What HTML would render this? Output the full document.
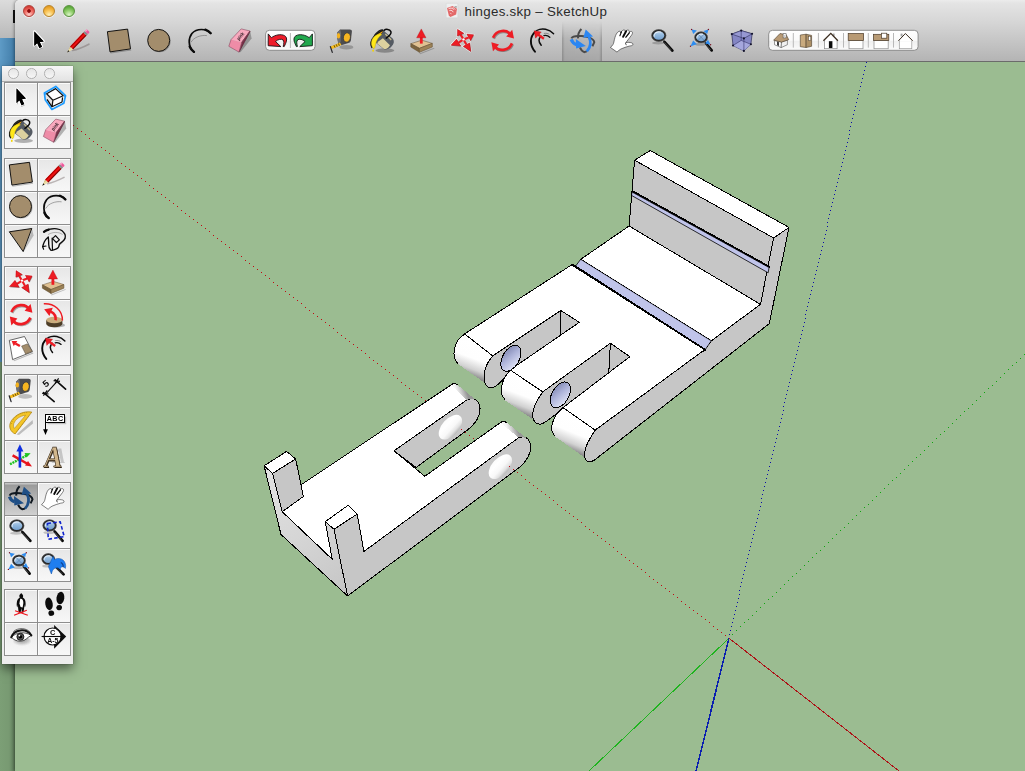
<!DOCTYPE html><html><head><meta charset="utf-8"><title>hinges.skp - SketchUp</title><style>
html,body{margin:0;padding:0}
body{width:1025px;height:771px;overflow:hidden;position:relative;background:#4d88b3;font-family:"Liberation Sans",sans-serif}
#back-top{position:absolute;left:0;top:0;width:20px;height:38px;background:linear-gradient(#dcdcdc,#b9b9b9)}
#back-blue{position:absolute;left:0;top:38px;width:16px;height:325px;background:linear-gradient(90deg,#5e9bc6,#3f7aa6)}
#back-green{position:absolute;left:0;top:362px;width:16px;height:409px;background:linear-gradient(90deg,#7c9f76 0,#789a72 9px,#5c7a58 15px)}
#back-dark{position:absolute;left:13px;top:10px;width:2px;height:13px;background:#111}
#win{position:absolute;left:15px;top:0;width:1010px;height:771px;background:linear-gradient(#ececec 0,#dcdcdc 30px,#9bbc91 30px);border-top-left-radius:5px;overflow:hidden;box-shadow:-1px 0 3px rgba(0,0,0,.35)}
#chrome{position:absolute;left:0;top:0;width:1010px;height:61px;background:linear-gradient(#ececec 0,#e4e4e4 3px,#d6d6d6 22px,#c2c2c2 45px,#b4b4b4 61px);border-bottom:1px solid #6b6b6b;box-sizing:content-box}
#title{position:absolute;left:449.5px;top:3.6px;height:16px;line-height:16px;font-size:13.3px;color:#2a2a2a;white-space:nowrap;letter-spacing:0.32px}
.tl{position:absolute;top:5px;width:12px;height:12px;border-radius:50%;box-sizing:border-box}
#sel{position:absolute;left:547px;top:21px;width:40px;height:40px;background:linear-gradient(90deg,rgba(0,0,0,.24),rgba(0,0,0,.09) 7%,rgba(0,0,0,.07) 93%,rgba(0,0,0,.24));-webkit-mask-image:linear-gradient(transparent,#000 45%);mask-image:linear-gradient(transparent,#000 45%)}
svg{position:absolute;left:0;top:0;will-change:transform}
#pal{position:absolute;left:2px;top:66px;width:71px;height:598px;background:#ededed;box-shadow:0 5px 10px rgba(0,0,0,.5),0 0 1px rgba(0,0,0,.5)}
#pal-t{position:absolute;left:0;top:0;width:71px;height:15px;background:linear-gradient(#f6f6f6,#e3e3e3);border-bottom:1px solid #a9a9a9}
.pc{position:absolute;top:2.2px;width:10.6px;height:10.6px;box-sizing:border-box;border-radius:50%;border:1px solid #b2b2b2;background:linear-gradient(#e6e6e6,#f6f6f6)}
.grp{position:absolute;left:2px;width:67px;background:#8e8e8e}
.cell{position:absolute;width:32px;height:32px;background:linear-gradient(#e6e6e6 0,#efefef 45%,#f7f7f7 100%);box-shadow:inset 1px 1px 0 #fbfbfb}
.cell.on{background:linear-gradient(#c4c4c4 0,#c4c4c4 1px,#9a9a9a 2px,#b6b6b6 50%,#d0d0d0);box-shadow:none}
</style></head><body>
<div id="back-top"></div><div id="back-blue"></div><div id="back-green"></div><div id="back-dark"></div>
<div id="win"><div id="chrome">
<div class="tl" style="left:8px;background:radial-gradient(circle at 50% 50%,#8a0a0a 0,#8a0a0a 1.4px,rgba(0,0,0,0) 2.2px),radial-gradient(circle at 50% 88%,#ffd0cb 0,#f3766e 42%,#d8443c 75%,#c8352e 100%);border:1px solid #b0403a;box-shadow:0 1px 0 rgba(255,255,255,.55)"></div>
<div class="tl" style="left:28px;background:radial-gradient(circle at 50% 88%,#fff0b8 0,#f9c458 42%,#e9a228 75%,#d8901c 100%);border:1px solid #b8842a;box-shadow:0 1px 0 rgba(255,255,255,.55)"></div>
<div class="tl" style="left:48px;background:radial-gradient(circle at 50% 88%,#dcf5c8 0,#94d070 42%,#62ae40 75%,#4f9a32 100%);border:1px solid #5a9240;box-shadow:0 1px 0 rgba(255,255,255,.55)"></div>
<svg width="14" height="17" viewBox="445 2 14 17" style="left:430px;top:2px"><rect x="446.2" y="3.3" width="11.6" height="14.5" rx=".8" fill="#eef0f0" stroke="#d2d4d4" stroke-width=".5"/><polygon points="447,7.9 452.5,6.1 457,8.8 456.1,14.5 450.4,16.9 448.8,15.6" fill="#e15a5a" opacity=".9"/><path d="M448.6,8.6 C450.6,7.6 452.6,8.2 453.6,9.6 M449.4,10.6 C451.4,9.8 452.8,10.8 453.2,12.2 M450.4,13.4 L451.4,13.8" stroke="#fff" stroke-width=".9" fill="none" opacity=".9"/><path d="M452.8,7.2 L455.2,9.6" stroke="#fff" stroke-width=".9" opacity=".85"/><rect x="454.6" y="6.2" width="2.2" height="1.4" fill="#8a8a8a" opacity=".8"/></svg>
<div id="title">hinges.skp – SketchUp</div>
<div id="sel"></div>
</div></div>
<svg width="1025" height="771" viewBox="0 0 1025 771" style="pointer-events:none"><defs><clipPath id="cv"><rect x="15" y="62" width="1010" height="709"/></clipPath></defs><g clip-path="url(#cv)">
<defs>
<linearGradient id="gk1" gradientUnits="userSpaceOnUse" x1="478" y1="342" x2="466" y2="374"><stop offset="0" stop-color="#fff"/><stop offset=".5" stop-color="#fefefe"/><stop offset=".8" stop-color="#d2d2d2"/><stop offset="1" stop-color="#8e8e8e"/></linearGradient>
<linearGradient id="gk2" gradientUnits="userSpaceOnUse" x1="525" y1="378" x2="513" y2="410"><stop offset="0" stop-color="#fff"/><stop offset=".5" stop-color="#fefefe"/><stop offset=".8" stop-color="#d2d2d2"/><stop offset="1" stop-color="#8e8e8e"/></linearGradient>
<linearGradient id="gk3" gradientUnits="userSpaceOnUse" x1="578" y1="416" x2="565" y2="448"><stop offset="0" stop-color="#fff"/><stop offset=".5" stop-color="#fefefe"/><stop offset=".8" stop-color="#d2d2d2"/><stop offset="1" stop-color="#8e8e8e"/></linearGradient>
<linearGradient id="ghole" x1="0" y1="0.2" x2="1" y2="0.8"><stop offset="0" stop-color="#7f86b0"/><stop offset=".45" stop-color="#aeb4da"/><stop offset="1" stop-color="#e4e7f8"/></linearGradient>
<linearGradient id="gsa" gradientUnits="userSpaceOnUse" x1="457" y1="393" x2="466" y2="390"><stop offset="0" stop-color="#f6f6f6"/><stop offset=".4" stop-color="#d4d4d4"/><stop offset="1" stop-color="#969696"/></linearGradient>
<linearGradient id="gsb" gradientUnits="userSpaceOnUse" x1="508" y1="431" x2="517" y2="428"><stop offset="0" stop-color="#f6f6f6"/><stop offset=".4" stop-color="#d4d4d4"/><stop offset="1" stop-color="#969696"/></linearGradient>
<linearGradient id="gfront" gradientUnits="userSpaceOnUse" x1="266" y1="470" x2="346" y2="590"><stop offset="0" stop-color="#e2e2e2"/><stop offset=".5" stop-color="#d6d6d6"/><stop offset="1" stop-color="#c6c6c6"/></linearGradient>
<linearGradient id="gpin" x1="0" y1="0" x2="0" y2="1"><stop offset="0" stop-color="#fbfbfb"/><stop offset=".25" stop-color="#ffffff"/><stop offset=".6" stop-color="#f8f8f8"/><stop offset=".82" stop-color="#e2e2e2"/><stop offset="1" stop-color="#b6b6b6"/></linearGradient>
</defs><g shape-rendering="crispEdges"><path d="M725,635h1v1h-1zM721,632h1v1h-1zM717,629h1v1h-1zM713,626h1v1h-1zM709,622h1v1h-1zM705,619h1v1h-1zM701,616h1v1h-1zM697,613h1v1h-1zM693,610h1v1h-1zM689,607h1v1h-1zM685,604h1v1h-1zM681,601h1v1h-1zM677,597h1v1h-1zM673,594h1v1h-1zM669,591h1v1h-1zM665,588h1v1h-1zM661,585h1v1h-1zM657,582h1v1h-1zM653,579h1v1h-1zM649,576h1v1h-1zM645,572h1v1h-1zM641,569h1v1h-1zM637,566h1v1h-1zM633,563h1v1h-1zM629,560h1v1h-1zM625,557h1v1h-1zM621,554h1v1h-1zM617,551h1v1h-1zM613,547h1v1h-1zM609,544h1v1h-1zM605,541h1v1h-1zM601,538h1v1h-1zM597,535h1v1h-1zM593,532h1v1h-1zM589,529h1v1h-1zM585,526h1v1h-1zM581,522h1v1h-1zM577,519h1v1h-1zM573,516h1v1h-1zM569,513h1v1h-1zM565,510h1v1h-1zM561,507h1v1h-1zM557,504h1v1h-1zM553,500h1v1h-1zM549,497h1v1h-1zM545,494h1v1h-1zM541,491h1v1h-1zM537,488h1v1h-1zM533,485h1v1h-1zM529,482h1v1h-1zM525,479h1v1h-1zM521,475h1v1h-1zM517,472h1v1h-1zM513,469h1v1h-1zM509,466h1v1h-1zM505,463h1v1h-1zM501,460h1v1h-1zM497,457h1v1h-1zM493,454h1v1h-1zM489,450h1v1h-1zM485,447h1v1h-1zM481,444h1v1h-1zM477,441h1v1h-1zM473,438h1v1h-1zM469,435h1v1h-1zM465,432h1v1h-1zM461,429h1v1h-1zM457,425h1v1h-1zM453,422h1v1h-1zM449,419h1v1h-1zM445,416h1v1h-1zM441,413h1v1h-1zM437,410h1v1h-1zM433,407h1v1h-1zM429,404h1v1h-1zM425,400h1v1h-1zM421,397h1v1h-1zM417,394h1v1h-1zM413,391h1v1h-1zM409,388h1v1h-1zM405,385h1v1h-1zM401,382h1v1h-1zM397,378h1v1h-1zM393,375h1v1h-1zM389,372h1v1h-1zM385,369h1v1h-1zM381,366h1v1h-1zM377,363h1v1h-1zM373,360h1v1h-1zM369,357h1v1h-1zM365,353h1v1h-1zM361,350h1v1h-1zM357,347h1v1h-1zM353,344h1v1h-1zM349,341h1v1h-1zM345,338h1v1h-1zM341,335h1v1h-1zM337,332h1v1h-1zM333,328h1v1h-1zM329,325h1v1h-1zM325,322h1v1h-1zM321,319h1v1h-1zM317,316h1v1h-1zM313,313h1v1h-1zM309,310h1v1h-1zM305,307h1v1h-1zM301,303h1v1h-1zM297,300h1v1h-1zM293,297h1v1h-1zM289,294h1v1h-1zM285,291h1v1h-1zM281,288h1v1h-1zM277,285h1v1h-1zM273,282h1v1h-1zM269,278h1v1h-1zM265,275h1v1h-1zM261,272h1v1h-1zM257,269h1v1h-1zM253,266h1v1h-1zM249,263h1v1h-1zM245,260h1v1h-1zM241,256h1v1h-1zM237,253h1v1h-1zM233,250h1v1h-1zM229,247h1v1h-1zM225,244h1v1h-1zM221,241h1v1h-1zM217,238h1v1h-1zM213,235h1v1h-1zM209,231h1v1h-1zM205,228h1v1h-1zM201,225h1v1h-1zM197,222h1v1h-1zM193,219h1v1h-1zM189,216h1v1h-1zM185,213h1v1h-1zM181,210h1v1h-1zM177,206h1v1h-1zM173,203h1v1h-1zM169,200h1v1h-1zM165,197h1v1h-1zM161,194h1v1h-1zM157,191h1v1h-1zM153,188h1v1h-1zM149,185h1v1h-1zM145,181h1v1h-1zM141,178h1v1h-1zM137,175h1v1h-1zM133,172h1v1h-1zM129,169h1v1h-1zM125,166h1v1h-1zM121,163h1v1h-1zM117,160h1v1h-1zM113,156h1v1h-1zM109,153h1v1h-1zM105,150h1v1h-1zM101,147h1v1h-1zM97,144h1v1h-1zM93,141h1v1h-1zM89,138h1v1h-1zM85,134h1v1h-1zM81,131h1v1h-1zM77,128h1v1h-1zM73,125h1v1h-1zM69,122h1v1h-1zM65,119h1v1h-1zM61,116h1v1h-1z" fill="#c00a14" shape-rendering="crispEdges"/><path d="M729,634h1v1h-1zM730,630h1v1h-1zM731,626h1v1h-1zM732,622h1v1h-1zM733,618h1v1h-1zM734,614h1v1h-1zM735,610h1v1h-1zM736,606h1v1h-1zM737,602h1v1h-1zM738,598h1v1h-1zM739,594h1v1h-1zM739,590h1v1h-1zM740,586h1v1h-1zM741,582h1v1h-1zM742,578h1v1h-1zM743,574h1v1h-1zM744,570h1v1h-1zM745,566h1v1h-1zM746,562h1v1h-1zM747,558h1v1h-1zM748,554h1v1h-1zM749,550h1v1h-1zM750,546h1v1h-1zM751,542h1v1h-1zM752,538h1v1h-1zM753,534h1v1h-1zM754,530h1v1h-1zM755,526h1v1h-1zM756,522h1v1h-1zM757,518h1v1h-1zM758,514h1v1h-1zM759,510h1v1h-1zM760,506h1v1h-1zM761,502h1v1h-1zM761,498h1v1h-1zM762,494h1v1h-1zM763,490h1v1h-1zM764,486h1v1h-1zM765,482h1v1h-1zM766,478h1v1h-1zM767,474h1v1h-1zM768,470h1v1h-1zM769,466h1v1h-1zM770,462h1v1h-1zM771,458h1v1h-1zM772,454h1v1h-1zM773,450h1v1h-1zM774,446h1v1h-1zM775,442h1v1h-1zM776,438h1v1h-1zM777,434h1v1h-1zM778,430h1v1h-1zM779,426h1v1h-1zM780,422h1v1h-1zM781,418h1v1h-1zM782,414h1v1h-1zM783,410h1v1h-1zM783,406h1v1h-1zM784,402h1v1h-1zM785,398h1v1h-1zM786,394h1v1h-1zM787,390h1v1h-1zM788,386h1v1h-1zM789,382h1v1h-1zM790,378h1v1h-1zM791,374h1v1h-1zM792,370h1v1h-1zM793,366h1v1h-1zM794,362h1v1h-1zM795,358h1v1h-1zM796,354h1v1h-1zM797,350h1v1h-1zM798,346h1v1h-1zM799,342h1v1h-1zM800,338h1v1h-1zM801,334h1v1h-1zM802,330h1v1h-1zM803,326h1v1h-1zM804,322h1v1h-1zM805,318h1v1h-1zM805,314h1v1h-1zM806,310h1v1h-1zM807,306h1v1h-1zM808,302h1v1h-1zM809,298h1v1h-1zM810,294h1v1h-1zM811,290h1v1h-1zM812,286h1v1h-1zM813,282h1v1h-1zM814,278h1v1h-1zM815,274h1v1h-1zM816,270h1v1h-1zM817,266h1v1h-1zM818,262h1v1h-1zM819,258h1v1h-1zM820,254h1v1h-1zM821,250h1v1h-1zM822,246h1v1h-1zM823,242h1v1h-1zM824,238h1v1h-1zM825,234h1v1h-1zM826,230h1v1h-1zM827,226h1v1h-1zM827,222h1v1h-1zM828,218h1v1h-1zM829,214h1v1h-1zM830,210h1v1h-1zM831,206h1v1h-1zM832,202h1v1h-1zM833,198h1v1h-1zM834,194h1v1h-1zM835,190h1v1h-1zM836,186h1v1h-1zM837,182h1v1h-1zM838,178h1v1h-1zM839,174h1v1h-1zM840,170h1v1h-1zM841,166h1v1h-1zM842,162h1v1h-1zM843,158h1v1h-1zM844,154h1v1h-1zM845,150h1v1h-1zM846,146h1v1h-1zM847,142h1v1h-1zM848,138h1v1h-1zM849,134h1v1h-1zM849,130h1v1h-1zM850,126h1v1h-1zM851,122h1v1h-1zM852,118h1v1h-1zM853,114h1v1h-1zM854,110h1v1h-1zM855,106h1v1h-1zM856,102h1v1h-1zM857,98h1v1h-1zM858,94h1v1h-1zM859,90h1v1h-1zM860,86h1v1h-1zM861,82h1v1h-1zM862,78h1v1h-1zM863,74h1v1h-1zM864,70h1v1h-1zM865,66h1v1h-1zM866,62h1v1h-1zM867,58h1v1h-1z" fill="#0a0aa8" shape-rendering="crispEdges"/><path d="M732,634h1v1h-1zM736,630h1v1h-1zM740,626h1v1h-1zM744,622h1v1h-1zM748,619h1v1h-1zM752,615h1v1h-1zM756,611h1v1h-1zM760,607h1v1h-1zM764,603h1v1h-1zM768,599h1v1h-1zM772,596h1v1h-1zM776,592h1v1h-1zM780,588h1v1h-1zM784,584h1v1h-1zM788,580h1v1h-1zM792,576h1v1h-1zM796,573h1v1h-1zM800,569h1v1h-1zM804,565h1v1h-1zM808,561h1v1h-1zM812,557h1v1h-1zM816,553h1v1h-1zM820,550h1v1h-1zM824,546h1v1h-1zM828,542h1v1h-1zM832,538h1v1h-1zM836,534h1v1h-1zM840,530h1v1h-1zM844,527h1v1h-1zM848,523h1v1h-1zM852,519h1v1h-1zM856,515h1v1h-1zM860,511h1v1h-1zM864,507h1v1h-1zM868,504h1v1h-1zM872,500h1v1h-1zM876,496h1v1h-1zM880,492h1v1h-1zM884,488h1v1h-1zM888,484h1v1h-1zM892,480h1v1h-1zM896,477h1v1h-1zM900,473h1v1h-1zM904,469h1v1h-1zM908,465h1v1h-1zM912,461h1v1h-1zM916,457h1v1h-1zM920,454h1v1h-1zM924,450h1v1h-1zM928,446h1v1h-1zM932,442h1v1h-1zM936,438h1v1h-1zM940,434h1v1h-1zM944,431h1v1h-1zM948,427h1v1h-1zM952,423h1v1h-1zM956,419h1v1h-1zM960,415h1v1h-1zM964,411h1v1h-1zM968,408h1v1h-1zM972,404h1v1h-1zM976,400h1v1h-1zM980,396h1v1h-1zM984,392h1v1h-1zM988,388h1v1h-1zM992,385h1v1h-1zM996,381h1v1h-1zM1000,377h1v1h-1zM1004,373h1v1h-1zM1008,369h1v1h-1zM1012,365h1v1h-1zM1016,362h1v1h-1zM1020,358h1v1h-1zM1024,354h1v1h-1z" fill="#10a410" shape-rendering="crispEdges"/><line x1="728.6" y1="638.6" x2="589.0" y2="771.0" stroke="#1fb41f" stroke-width="1.0" stroke-linecap="round" /><line x1="729.4" y1="638.5" x2="899.0" y2="771.0" stroke="#ac1418" stroke-width="1.0" stroke-linecap="round" /><line x1="728.8" y1="639.0" x2="696.0" y2="771.0" stroke="#0a1fb0" stroke-width="1.5" stroke-linecap="round" /><path d="M394,450.8 L466.9,399.9 C467.8,399.7 470.4,398.5 472.0,398.6 C473.6,398.7 475.3,399.4 476.6,400.5 C477.9,401.6 479.1,403.6 479.6,405.5 C480.1,407.4 480.2,409.7 479.8,412.0 C479.4,414.3 478.2,417.2 477.0,419.5 C475.8,421.8 474.0,423.8 472.5,425.5 C471.0,427.2 468.6,429.0 467.8,429.7 L416,467.5 Z" fill="#c6c6c6" stroke="#000" stroke-width="1.0" stroke-linejoin="round" /><path d="M363.9,551.5 L518.7,437.6 C519.6,437.5 522.4,436.7 524.0,437.0 C525.6,437.3 527.2,438.1 528.3,439.5 C529.4,440.9 530.5,443.4 530.8,445.5 C531.1,447.6 530.7,449.7 530.0,452.0 C529.3,454.3 527.9,457.2 526.5,459.5 C525.1,461.8 523.1,463.9 521.5,465.5 C519.9,467.1 517.8,468.6 517.0,469.2 L347.6,596 L334,529.2 L357.2,514.1 Z" fill="#c6c6c6" stroke="#000" stroke-width="1.0" stroke-linejoin="round" /><path d="M451.1,384.9 C453,383.3 455.8,383.6 457.6,385 L476.6,400.5 C474,398.6 470,398.6 466.9,399.9 Z" fill="url(#gsa)" stroke="none" stroke-width="0" stroke-linejoin="round" /><path d="M500.3,422.7 C502.3,421.2 505,421.4 506.9,422.9 L528.3,439.5 C525.5,437 521.5,436.6 518.7,437.6 Z" fill="url(#gsb)" stroke="none" stroke-width="0" stroke-linejoin="round" /><path d="M451.1,384.9 C453,383.3 455.8,383.6 457.6,385" fill="none" stroke="#000" stroke-width="1.0" stroke-linejoin="round" /><path d="M500.3,422.7 C502.3,421.2 505,421.4 506.9,422.9" fill="none" stroke="#000" stroke-width="1.0" stroke-linejoin="round" /><polygon points="282.2,511.7 291.0,491.5 451.1,384.9 466.9,399.9 394.0,450.8 424.8,476.3 500.3,422.7 518.7,437.6 363.9,551.5 340.5,567.0" fill="#ffffff" stroke="none" stroke-width="0" stroke-linejoin="round" /><path d="M291,491.5 L451.1,384.9 M466.9,399.9 L394,450.8 L424.8,476.3 L500.3,422.7 M518.7,437.6 L363.9,551.5 M282.2,511.7 L340.5,567" fill="none" stroke="#000" stroke-width="1" stroke-linejoin="round"/><polygon points="264.1,465.8 272.6,473.4 282.2,511.7 332.3,559.4 325.2,521.7 334.0,529.2 347.6,596.0 281.0,534.5" fill="url(#gfront)" stroke="#000" stroke-width="1.0" stroke-linejoin="round" /><polygon points="272.6,473.4 295.7,459.0 303.3,496.6 282.2,511.7" fill="#c6c6c6" stroke="#000" stroke-width="1.0" stroke-linejoin="round" /><polygon points="264.1,465.8 286.6,451.4 295.7,459.0 272.6,473.4" fill="#ffffff" stroke="#000" stroke-width="1.0" stroke-linejoin="round" /><polygon points="334.0,529.2 357.2,514.1 363.9,551.5 350.0,563.0 341.3,569.0" fill="#c6c6c6" stroke="#c6c6c6" stroke-width="1.2" stroke-linejoin="round" /><line x1="357.2" y1="514.1" x2="363.9" y2="551.5" stroke="#000" stroke-width="1.0" stroke-linecap="round" /><line x1="334.0" y1="529.2" x2="347.6" y2="596.0" stroke="#000" stroke-width="1.0" stroke-linecap="round" /><polygon points="325.2,521.7 348.1,505.3 357.2,514.1 334.0,529.2" fill="#ffffff" stroke="#000" stroke-width="1.0" stroke-linejoin="round" /><ellipse cx="450.4" cy="427.2" rx="14.8" ry="8.4" transform="rotate(-48 450.4 427.2)" fill="url(#gpin)" shape-rendering="auto"/><ellipse cx="500.4" cy="466.7" rx="14.8" ry="8.4" transform="rotate(-48 500.4 466.7)" fill="url(#gpin)" shape-rendering="auto"/><path d="M461,429h1v1h-1zM465,432h1v1h-1zM509,466h1v1h-1zM513,469h1v1h-1z" fill="#c00a14" shape-rendering="crispEdges"/><polygon points="773.6,238.0 789.0,227.4 769.3,323.6 593.8,460.6 585.0,455.0 595.2,430.1 704.3,350.0 711.3,340.8 760.5,304.3" fill="#c6c6c6" stroke="#000" stroke-width="1.0" stroke-linejoin="round" /><polygon points="634.6,160.2 650.2,150.5 789.0,227.4 773.6,238.0" fill="#ffffff" stroke="#000" stroke-width="1.0" stroke-linejoin="round" /><polygon points="634.6,160.2 773.6,238.0 760.5,304.3 629.1,226.0" fill="#c6c6c6" stroke="#000" stroke-width="1.0" stroke-linejoin="round" /><polygon points="632.0,192.0 769.0,267.5 768.2,272.8 631.5,195.4" fill="#c0c4ea" stroke="#000" stroke-width="0.8" stroke-linejoin="round" /><line x1="632.3" y1="191.0" x2="769.4" y2="266.8" stroke="#000" stroke-width="1.7" stroke-linecap="round" /><polygon points="629.1,226.0 760.5,304.3 711.3,340.8 580.7,259.3" fill="#ffffff" stroke="#000" stroke-width="1.0" stroke-linejoin="round" /><polygon points="580.7,259.3 711.3,340.8 705.1,349.8 575.5,266.2" fill="#c0c4ea" stroke="#000" stroke-width="0.8" stroke-linejoin="round" /><line x1="572.5" y1="264.6" x2="705.1" y2="349.8" stroke="#000" stroke-width="2.0" stroke-linecap="round" /><polygon points="571.6,264.9 705.0,350.0 595.2,430.1 563.0,407.6 629.8,356.7 610.4,343.2 542.8,391.8 510.2,369.9 579.3,322.3 560.8,310.5 492.7,355.9 464.6,333.9" fill="#ffffff" stroke="#000" stroke-width="1.0" stroke-linejoin="round" /><path d="M464.6,333.9 C463.4,335.1 459.2,338.5 457.5,341.0 C455.8,343.5 454.9,346.3 454.4,349.0 C453.9,351.7 453.7,354.5 454.3,357.0 C454.9,359.5 457.2,362.8 457.8,363.9 L484.2,382.4 C484.3,380.6 484.1,374.6 484.6,371.5 C485.2,368.4 486.1,366.1 487.5,363.5 C488.9,360.9 491.8,357.2 492.7,355.9 Z" fill="url(#gk1)" stroke="none" stroke-width="0" stroke-linejoin="round" /><path d="M464.6,333.9 C463.4,335.1 459.2,338.5 457.5,341.0 C455.8,343.5 454.9,346.3 454.4,349.0 C453.9,351.7 453.7,354.5 454.3,357.0 C454.9,359.5 457.2,362.8 457.8,363.9" fill="none" stroke="#000" stroke-width="1.0" stroke-linejoin="round" /><line x1="464.6" y1="333.9" x2="492.7" y2="355.9" stroke="#000" stroke-width="1.0" stroke-linecap="round" /><path d="M492.7,355.9 C491.8,357.2 488.9,360.9 487.5,363.5 C486.1,366.1 485.2,368.8 484.6,371.5 C484.1,374.2 483.8,377.5 484.2,380.0 C484.6,382.5 485.7,385.0 487.0,386.3 C488.3,387.6 490.2,388.1 492.0,387.8 C493.8,387.5 495.9,386.2 498.0,384.5 C500.1,382.8 502.5,379.9 504.5,377.5 C506.5,375.1 509.2,371.2 510.2,369.9 L579.3,322.3 L560.8,310.5 Z" fill="#c6c6c6" stroke="#000" stroke-width="1.0" stroke-linejoin="round" /><line x1="560.8" y1="310.5" x2="560.8" y2="334.6" stroke="#000" stroke-width="1.0" stroke-linecap="round" /><path d="M510.2,369.9 C509.2,371.2 505.9,375.3 504.5,378.0 C503.1,380.7 502.3,383.3 501.8,386.0 C501.3,388.7 501.1,391.6 501.7,394.0 C502.3,396.4 504.9,399.4 505.5,400.5 L532.4,419.2 C532.6,417.4 532.9,411.7 533.8,408.5 C534.6,405.3 536.0,402.8 537.5,400.0 C539.0,397.2 541.8,393.2 542.7,391.9 Z" fill="url(#gk2)" stroke="none" stroke-width="0" stroke-linejoin="round" /><path d="M510.2,369.9 C509.2,371.2 505.9,375.3 504.5,378.0 C503.1,380.7 502.3,383.3 501.8,386.0 C501.3,388.7 501.1,391.6 501.7,394.0 C502.3,396.4 504.9,399.4 505.5,400.5" fill="none" stroke="#000" stroke-width="1.0" stroke-linejoin="round" /><line x1="510.2" y1="369.9" x2="542.7" y2="391.9" stroke="#000" stroke-width="1.0" stroke-linecap="round" /><path d="M542.7,391.9 C541.8,393.2 539.0,397.2 537.5,400.0 C536.0,402.8 534.6,405.8 533.8,408.5 C533.0,411.2 532.3,414.2 532.6,416.5 C532.9,418.8 534.1,421.2 535.5,422.5 C536.9,423.8 539.0,424.3 541.0,424.0 C543.0,423.7 545.0,422.2 547.5,420.5 C550.0,418.8 553.4,416.1 556.0,414.0 C558.6,411.9 561.8,408.7 563.0,407.6 L629.8,356.7 L610.4,343.2 Z" fill="#c6c6c6" stroke="#000" stroke-width="1.0" stroke-linejoin="round" /><line x1="610.4" y1="343.2" x2="608.8" y2="372.3" stroke="#000" stroke-width="1.0" stroke-linecap="round" /><path d="M563.0,407.6 C561.9,408.8 558.2,412.1 556.5,414.5 C554.8,416.9 553.6,419.4 552.8,422.0 C552.0,424.6 551.5,427.6 551.8,430.0 C552.1,432.4 554.1,435.2 554.6,436.2 L584.3,457.2 C584.6,455.5 585.0,450.1 586.0,447.0 C587.0,443.9 588.5,441.3 590.0,438.5 C591.5,435.7 594.3,431.5 595.2,430.1 Z" fill="url(#gk3)" stroke="none" stroke-width="0" stroke-linejoin="round" /><path d="M563.0,407.6 C561.9,408.8 558.2,412.1 556.5,414.5 C554.8,416.9 553.6,419.4 552.8,422.0 C552.0,424.6 551.5,427.6 551.8,430.0 C552.1,432.4 554.1,435.2 554.6,436.2" fill="none" stroke="#000" stroke-width="1.0" stroke-linejoin="round" /><line x1="563.0" y1="407.6" x2="595.2" y2="430.1" stroke="#000" stroke-width="1.0" stroke-linecap="round" /><path d="M595.2,430.1 C594.3,431.5 591.5,435.7 590.0,438.5 C588.5,441.3 586.9,444.2 586.0,447.0 C585.1,449.8 584.3,452.8 584.4,455.0 C584.5,457.2 585.5,459.4 586.5,460.5 C587.5,461.6 589.2,461.9 590.5,461.8 C591.8,461.7 593.8,460.3 594.5,460.0 L704.3,350 Z" fill="#c6c6c6" stroke="none" stroke-width="0" stroke-linejoin="round" /><path d="M595.2,430.1 C594.3,431.5 591.5,435.7 590.0,438.5 C588.5,441.3 586.9,444.2 586.0,447.0 C585.1,449.8 584.3,452.8 584.4,455.0 C584.5,457.2 585.5,459.4 586.5,460.5 C587.5,461.6 589.2,461.9 590.5,461.8 C591.8,461.7 593.8,460.3 594.5,460.0" fill="none" stroke="#000" stroke-width="1.0" stroke-linejoin="round" /><line x1="594.5" y1="460.0" x2="769.3" y2="323.6" stroke="#000" stroke-width="1.0" stroke-linecap="round" /><line x1="595.2" y1="430.1" x2="704.3" y2="350.0" stroke="#000" stroke-width="1.0" stroke-linecap="round" /><ellipse cx="510.9" cy="358.3" rx="8.4" ry="14.1" transform="rotate(30 510.9 358.3)" fill="url(#ghole)" stroke="#000" stroke-width="1"/><ellipse cx="560.4" cy="394.9" rx="8.4" ry="14.1" transform="rotate(30 560.4 394.9)" fill="url(#ghole)" stroke="#000" stroke-width="1"/></g>
</g>
<defs><linearGradient id="gbox" x1="0" y1="0" x2="0" y2="1"><stop offset="0" stop-color="#fff"/><stop offset=".5" stop-color="#fafafa"/><stop offset=".55" stop-color="#f0f0f0"/><stop offset="1" stop-color="#fbfbfb"/></linearGradient><linearGradient id="glens" x1="0" y1="0" x2="0" y2="1"><stop offset="0" stop-color="#c6dcf2"/><stop offset=".5" stop-color="#8fb6dc"/><stop offset="1" stop-color="#6f9ccb"/></linearGradient><radialGradient id="geye" cx=".5" cy=".3" r=".6"><stop offset="0" stop-color="#666" stop-opacity=".75"/><stop offset=".6" stop-color="#888" stop-opacity=".4"/><stop offset="1" stop-color="#aaa" stop-opacity="0"/></radialGradient></defs><g transform="translate(38.8 41.8)" ><path d="M-4.4,-10.4 L-4.4,3.9 L-1.6,1.3 L0.6,6.2 L3.2,5.0 L0.9,0.2 L4.9,-0.4 Z" fill="#000" stroke="#fff" stroke-width="2.3" stroke-linejoin="round" paint-order="stroke"/><path d="M-3.6,-8.4 L-3.6,5.2 M0.2,7.6 L3.8,6" stroke="#000" stroke-width="1" opacity=".25" fill="none"/><path d="M-4.4,-10.4 L-4.4,3.9 L-1.6,1.3 L0.6,6.2 L3.2,5.0 L0.9,0.2 L4.9,-0.4 Z" fill="#000"/></g><g transform="translate(78.9 41.8)" ><path d="M-6.4,8.6 C-1,7.6 5,5 10,2.4" fill="none" stroke="#6a5a5a" stroke-width="1.6" opacity=".4" stroke-linecap="round"/><g transform="translate(-11.8 10.8) rotate(-46.1)"><polygon points="0,0 6.6,-2.1 6.6,2.1" fill="#ecdca4"/><polygon points="3.4,-1.1 6.6,-2.1 6.6,-0.6" fill="#c8b47c"/><polygon points="0,0 2.6,-0.85 2.6,0.85" fill="#111"/><rect x="6.6" y="-2.1" width="19.2" height="4.2" fill="#ee1010"/><rect x="6.6" y="-2.1" width="19.2" height="1.1" fill="#b00000"/><rect x="6.6" y="1.0" width="19.2" height="1.1" fill="#5a0000" opacity=".75"/><rect x="25.6" y="-2.2" width="2.3" height="4.4" fill="#8a8a8a"/><rect x="27.7" y="-2.2" width="2.7" height="4.4" rx="1" fill="#f0589c"/><rect x="27.7" y="-2.2" width="2.7" height="1.4" rx=".7" fill="#f9a0c8"/></g></g><g transform="translate(119.1 41.8)" ><polygon points="-9,10.8 11.8,7.8 12.2,8.8 -8.4,11.8" fill="#000" opacity=".25"/><polygon points="-11.7,-10.1 8.5,-12.7 11.4,7.1 -9.1,10.1" fill="#a38d6c" stroke="#0b0b0b" stroke-width=".95" stroke-linejoin="round"/></g><g transform="translate(159.2 41.8)" ><circle cx="0.5" cy="-0.6" r="11" fill="#000" opacity=".25"/><circle cx="-0.5" cy="-1.4" r="11" fill="#a38d6c" stroke="#0b0b0b" stroke-width=".95"/></g><g transform="translate(199.3 41.8)" ><path d="M-8.4,0.6 C-5.6,-4.6 1.6,-7 7.6,-6.2" fill="none" stroke="#666" stroke-width=".8" opacity=".7"/><path d="M-10.2,2.6 C-10.4,5.6 -9,8.2 -6.2,9.8" fill="none" stroke="#555" stroke-width=".8" opacity=".7"/><path d="M11.4,-8.6 C7,-13.4 -2.6,-13.8 -7.4,-8.3 C-11,-3.6 -11.6,4.6 -5.3,10.1" fill="none" stroke="#0b0b0b" stroke-width="1.7" stroke-linecap="round"/><path d="M11.4,-8.6 C10,-10.2 8,-11.4 6,-12.2 M-9.6,4.8 C-8.8,7 -7.4,8.8 -5.3,10.1" fill="none" stroke="#0b0b0b" stroke-width="2.3" stroke-linecap="round"/></g><g transform="translate(239.4 41.8)" ><polygon points="0,10.6 2.6,1 10.9,-10.4 12.2,-3.4 1.2,10.2" fill="#000" opacity=".26"/><polygon points="-8.3,-2.3 1.8,-12.9 10.6,-10.8 2.3,0.6" fill="#f9a9be"/><polygon points="-8.3,-2.3 2.3,0.6 -0.4,10.3 -10.6,4.5" fill="#ee8ca7"/><path d="M2.3,0.6 L10.6,-10.8 L10.1,-9.2 L-0.4,10.3" fill="#7a3048" stroke="#5a2034" stroke-width=".7"/><polygon points="-8.3,-2.3 1.8,-12.9 10.6,-10.8 2.3,0.6 -0.4,10.3 -10.6,4.5" fill="none" stroke="#8a4a60" stroke-width=".6"/><text x="0" y="0" transform="translate(2.3 -4.4) rotate(-50) scale(.85 1)" font-family="Liberation Sans,sans-serif" font-size="5" font-weight="bold" fill="#2e1c24" text-anchor="middle">pink</text></g><rect x="265.6" y="30.3" width="49.4" height="20" rx="3.8" fill="url(#gbox)" stroke="#858585" stroke-width=".9"/><line x1="290.4" y1="33" x2="290.4" y2="48" stroke="#b4b4b4" stroke-width="1"/><g transform="translate(278.0 40.3)" ><path d="M-9.8,-6.4 L-6.6,-2.6 C-3,-5.4 3,-6.6 6.6,-4.6 C9.2,-3 9,0 7.6,3.2 L6.2,6.3 L5.2,6.2 C6,3 6.2,1 5,-0.4 C3.4,-1.7 0,-1 -2.5,1.2 L2.8,6.3 L-9.8,5.4 Z" fill="#ee1c2a" stroke="#1a1014" stroke-width=".9" stroke-linejoin="round"/></g><g transform="translate(302.6 40.3)" ><path d="M-9.8,-6.4 L-6.6,-2.6 C-3,-5.4 3,-6.6 6.6,-4.6 C9.2,-3 9,0 7.6,3.2 L6.2,6.3 L5.2,6.2 C6,3 6.2,1 5,-0.4 C3.4,-1.7 0,-1 -2.5,1.2 L2.8,6.3 L-9.8,5.4 Z" transform="scale(-1 1)" fill="#22a84e" stroke="#101a14" stroke-width=".9" stroke-linejoin="round"/></g><g transform="translate(342.2 41.8)" ><ellipse cx="4.2" cy="5.4" rx="7" ry="2.3" fill="#000" opacity=".22"/><path d="M-2,-12.3 L7.6,-12.3 C9,-12.3 9.8,-11.4 9.7,-10 L8.7,-1.6 C8.5,-0.2 7.6,0.8 6.2,1.3 L-0.2,3.3 C-1.2,3.5 -2,3.2 -2.6,2.4 L-4.2,0.2 L-5.2,-5.3 L-4.7,-9.6 Z" fill="#4c4c4e"/><path d="M-2,-12.3 L-4.7,-9.6 L-5.2,-5.3 L-4.2,0.2 L-2.6,2.4 L-1.6,-0.6 L-1.2,-8.6 Z" fill="#6e6e72"/><ellipse cx="-3.7" cy="-6.1" rx="1.7" ry="2.7" fill="#f5b21c"/><ellipse cx="4.7" cy="-4.3" rx="3.5" ry="4.7" transform="rotate(12 4.7 -4.3)" fill="#f7b520" stroke="#2e3440" stroke-width=".7"/><polygon points="-2.2,0.8 -0.8,3.3 -10.6,7.4 -11.6,4.8" fill="#f6bb1e"/><path d="M-3.8,1.6 L-2.8,4 M-6,2.5 L-5,4.9 M-8.2,3.4 L-7.2,5.8" stroke="#3a3000" stroke-width=".9" opacity=".8"/><path d="M-11.8,4.8 L-9.9,10.6" stroke="#2c2c30" stroke-width="1.3" stroke-linecap="round"/></g><g transform="translate(382.3 41.8)" ><ellipse cx="2.6" cy="8.7" rx="9.4" ry="2.2" fill="#000" opacity=".28"/><path d="M-8.1,-4.8 L0.6,-11.9 L10.6,-3 C12.4,-0.6 11.6,2.4 9,5 C6.6,7.6 3.6,8.4 1.4,7.2 L-6,1.4 Z" fill="#555b63"/><path d="M-5.2,1.6 L-4,-0.4 L0.6,-3.6 L7.7,3.5 C6.6,5.4 5,6.8 3.5,7.2 C2.6,7.4 1.8,7.2 1.4,7 Z" fill="#dcd19f"/><path d="M3.4,-8.4 L9.3,-2.6 L8.6,-1.2 L2.6,-7.4 Z" fill="#c9bd8c"/><ellipse cx="-3.75" cy="-8.35" rx="5.9" ry="2.3" transform="rotate(-39 -3.75 -8.35)" fill="#1c1f24"/><ellipse cx="-3.3" cy="-8.1" rx="4.6" ry="1.4" transform="rotate(-39 -3.3 -8.1)" fill="#f0a316"/><path d="M1.8,-11.4 C3.4,-13 7.4,-12.8 8.6,-10.2 C9.4,-8 6.6,-5.4 3.9,-3.6" fill="none" stroke="#0b0b0b" stroke-width="1.5" stroke-linecap="round"/><path d="M0.2,-11.4 C-5,-8.6 -10.4,-3.6 -11.3,0.6 C-11.6,2.6 -11.2,4.4 -10.4,5.6" fill="none" stroke="#15181c" stroke-width="1.5" stroke-linecap="round"/><path d="M-6.8,-6.2 C-4,-8 -1,-8.6 -0.6,-7 C-3.6,-5.2 -6,-1.4 -6.8,2.6 C-7.2,5.2 -7.8,7.2 -8.8,6.8 C-10.6,5 -11.4,1.6 -10.6,-1 C-9.8,-3.4 -8.6,-5 -6.8,-6.2 Z" fill="#ffe81a" stroke="#b89a00" stroke-width=".4"/><ellipse cx="-9.2" cy="8.9" rx=".9" ry="1.1" fill="#f5d400"/></g><g transform="translate(422.4 41.8)" ><polygon points="-3,11.6 10.9,6.2 12.4,6.6 -2.4,12.4" fill="#000" opacity=".22"/><polygon points="-11.6,1.9 -0.6,-1.6 9.9,1.6 -3,6.5" fill="#e0c192" stroke="#5e4a2c" stroke-width=".5" stroke-linejoin="round"/><polygon points="-11.6,1.9 -3,6.5 -3,10.5 -11.6,5.2" fill="#7c643e" stroke="#5e4a2c" stroke-width=".5" stroke-linejoin="round"/><polygon points="-3,6.5 9.9,1.6 9.9,5.2 -3,10.5" fill="#9d8358" stroke="#5e4a2c" stroke-width=".5" stroke-linejoin="round"/><rect x="-2.5" y="-5" width="2.8" height="6.8" fill="#ee1c24"/><polygon points="-1.1,-12.9 -5.8,-4.0 3.6,-4.0" fill="#ee1c24" stroke="#a00008" stroke-width=".3"/></g><g transform="translate(462.5 41.8)" ><polygon points="-5.0,-12.5 -5.2,-5.8 1.4,-8.5" fill="#fff" stroke="#fff" stroke-width="1.6" stroke-linejoin="round"/><polygon points="-5.0,-12.5 -5.2,-5.8 1.4,-8.5" fill="#000" opacity=".35" transform="translate(.5 .8)"/><polygon points="11.2,-7.1 4.3,-7.7 8.1,-1.1" fill="#fff" stroke="#fff" stroke-width="1.6" stroke-linejoin="round"/><polygon points="11.2,-7.1 4.3,-7.7 8.1,-1.1" fill="#000" opacity=".35" transform="translate(.5 .8)"/><polygon points="8.3,9.7 0.6,4.5 7.2,1.0" fill="#fff" stroke="#fff" stroke-width="1.6" stroke-linejoin="round"/><polygon points="8.3,9.7 0.6,4.5 7.2,1.0" fill="#000" opacity=".35" transform="translate(.5 .8)"/><polygon points="-11.6,3.5 -6.0,-2.7 -1.7,4.3" fill="#fff" stroke="#fff" stroke-width="1.6" stroke-linejoin="round"/><polygon points="-11.6,3.5 -6.0,-2.7 -1.7,4.3" fill="#000" opacity=".35" transform="translate(.5 .8)"/><line x1="1.0" y1="-2.4" x2="-1.9" y2="-7.2" stroke="#ee1c24" stroke-width="2.1"/><polygon points="-5.0,-12.5 -5.2,-5.8 1.4,-8.5" fill="#ee1c24" stroke="#a00008" stroke-width=".4"/><line x1="1.0" y1="-2.4" x2="6.2" y2="-4.4" stroke="#ee1c24" stroke-width="2.1"/><polygon points="11.2,-7.1 4.3,-7.7 8.1,-1.1" fill="#ee1c24" stroke="#a00008" stroke-width=".4"/><line x1="1.0" y1="-2.4" x2="3.9" y2="2.8" stroke="#ee1c24" stroke-width="2.1"/><polygon points="8.3,9.7 0.6,4.5 7.2,1.0" fill="#ee1c24" stroke="#a00008" stroke-width=".4"/><line x1="1.0" y1="-2.4" x2="-3.9" y2="0.8" stroke="#ee1c24" stroke-width="2.1"/><polygon points="-11.6,3.5 -6.0,-2.7 -1.7,4.3" fill="#ee1c24" stroke="#a00008" stroke-width=".4"/><circle cx="1.0" cy="-2.4" r="1.2" fill="#fff"/></g><g transform="translate(502.6 41.8)" ><g transform="translate(.8 1)" opacity=".3"><path d="M-9.6,-4 C-6,-12.6 5,-12.8 8.2,-6.6" fill="none" stroke="#000" stroke-width="2.6"/><path d="M9.4,1.4 C6,9.6 -4.6,9.8 -8,4" fill="none" stroke="#000" stroke-width="2.6"/></g><path d="M-9.6,-4 C-6,-12.4 4.6,-12.8 8,-6.8" fill="none" stroke="#ee1c24" stroke-width="2.7"/><polygon points="11.4,-3.2 3.6,-5.2 9.6,-12" fill="#ee1c24"/><path d="M9.4,1.6 C6,9.6 -4.4,10 -8,4.2" fill="none" stroke="#ee1c24" stroke-width="2.7"/><polygon points="-11.2,0.4 -3.6,2.6 -9.6,9.4" fill="#ee1c24"/></g><g transform="translate(542.7 41.8)" ><path d="M-7.7,9.9 C-13.4,3 -13,-5 -7.4,-10.2" fill="none" stroke="#0b0b0b" stroke-width="1.9" stroke-linecap="round"/><path d="M-6,-11.3 C-0.6,-14.2 6.6,-12.8 10.9,-8" fill="none" stroke="#0b0b0b" stroke-width="1.4" stroke-linecap="round"/><path d="M-1.5,3.4 C-4.6,-0.2 -4.2,-3.4 -1.6,-5.6" fill="none" stroke="#0b0b0b" stroke-width="1.5" stroke-linecap="round"/><path d="M1.2,-6.2 C3.4,-6.8 5.6,-6 7.1,-4.6" fill="none" stroke="#0b0b0b" stroke-width="1.3" stroke-linecap="round"/><path d="M1.6,-8.4 C3.6,-8.8 5.2,-8.4 6.4,-7.6" fill="none" stroke="#555" stroke-width=".8" stroke-linecap="round" opacity=".7"/><line x1="1.2" y1="-3" x2="-4.4" y2="-7" stroke="#ee1c24" stroke-width="2.3"/><polygon points="-8.6,-11 -1.4,-9.8 -7.2,-3.6" fill="#ee1c24" stroke="#a00008" stroke-width=".3"/></g><g transform="translate(582.8 41.8)" ><path d="M-11.4,-3.4 C-10.4,-5.6 -6,-6.2 -1,-5.7 L4.9,-4.7 C8,-3.8 11.2,-1.6 11.5,0.4 L9.6,4.4" fill="none" stroke="#4a4a4a" stroke-width="2"/><path d="M-1.4,-12.8 C-3.6,-10.6 -5,-7 -4.7,-3.4 M-2.9,5.6 C-1.8,8 -0.2,9.8 1.4,10.3 L4,9.6" fill="none" stroke="#4a4a4a" stroke-width="2"/><path d="M-11.6,-2.4 C-10.4,0.6 -8.6,2.2 -6.4,2.8" fill="none" stroke="#2b86f2" stroke-width="3.2"/><polygon points="-7,-2.9 3,4.2 -6.7,6.6" fill="#2b86f2"/><path d="M4,9.6 C7.6,5.6 8.6,0 6,-5.2" fill="none" stroke="#2b86f2" stroke-width="2.7"/><polygon points="2.9,-12.2 0.5,-4.0 10.2,-5.4" fill="#2b86f2"/></g><g transform="translate(622.9 41.8)" ><path d="M-12.5,5.6 C-10,3.6 -9.4,2 -9,0.2 C-8.4,-3 -7.6,-6 -6.6,-7.7 C-5.6,-9.6 -4,-10.8 -3,-10.5 C-2.2,-10.2 -2.2,-9.4 -2.4,-8.8 C-1.4,-10.6 0.2,-12.2 1.4,-11.8 C2.4,-11.4 2.4,-10.4 2.2,-9.8 C3.2,-11.2 4.6,-12.2 5.6,-11.6 C6.6,-11 6.4,-10 6.2,-9.4 C7.2,-10.4 8.4,-10.8 9.2,-10 C10,-9 9.4,-7.8 8.6,-6.6 C7,-4.2 4.6,-1.6 2.9,0.9 C4.6,0.4 7.2,0.6 8.6,1 C10,1.4 10.4,2.6 9.6,3.4 C8.4,4.2 7.2,4 6.6,4.2 C3.6,5 0.6,6 -2,7.2 C-3.6,8 -4.8,9.2 -5.9,10.3 Z" fill="#fff" stroke="#1a1a1a" stroke-width=".55" stroke-linejoin="round"/><path d="M-1.4,-10 L-3,-6" stroke="#0b0b0b" stroke-width="1.1" stroke-linecap="round" fill="none"/><path d="M3.2,-10.6 L0.2,-5" stroke="#0b0b0b" stroke-width="1.9" stroke-linecap="round" fill="none"/><path d="M6.4,-9 L3,-4.6" stroke="#0b0b0b" stroke-width="1.3" stroke-linecap="round" fill="none"/><path d="M2.9,0.9 C2.4,2 2.6,2.8 3.6,3" stroke="#0b0b0b" stroke-width=".8" fill="none"/></g><g transform="translate(663.0 41.8)" ><ellipse cx="-4.8" cy="1.2" rx="6.2" ry="1.5" fill="#000" opacity=".2"/><line x1="0.1" y1="-1.6" x2="1.5" y2="0.1" stroke="#6a6a6a" stroke-width="1.7"/><line x1="1.5" y1="0.1" x2="9.4" y2="8.8" stroke="#0b0b0b" stroke-width="2.7" stroke-linecap="round"/><line x1="1.4" y1="0.7" x2="8.4" y2="8.4" stroke="#8a8a8a" stroke-width=".6" opacity=".8"/><ellipse cx="-4.2" cy="-6.3" rx="6.5" ry="5.3" fill="url(#glens)" stroke="#262626" stroke-width="1.9"/><ellipse cx="-4.2" cy="-6.3" rx="7.2" ry="6.0" fill="none" stroke="#777" stroke-width=".5" opacity=".8"/><path d="M-8.9,-5.5 A4.8,3.9 0 0 1 -2.6,-9.9" fill="none" stroke="#fff" stroke-width="1" opacity=".8" stroke-linecap="round"/></g><g transform="translate(703.1 41.8)" ><ellipse cx="-2.6" cy="2.5" rx="5.5" ry="1.5" fill="#000" opacity=".2"/><line x1="1.6" y1="-0.1" x2="3.0" y2="1.7" stroke="#6a6a6a" stroke-width="1.7"/><line x1="3.0" y1="1.7" x2="8.6" y2="8.6" stroke="#0b0b0b" stroke-width="2.7" stroke-linecap="round"/><line x1="2.8" y1="2.3" x2="7.6" y2="8.1" stroke="#8a8a8a" stroke-width=".6" opacity=".8"/><ellipse cx="-2.0" cy="-4.5" rx="5.8" ry="4.8" fill="url(#glens)" stroke="#262626" stroke-width="1.9"/><ellipse cx="-2.0" cy="-4.5" rx="6.5" ry="5.5" fill="none" stroke="#777" stroke-width=".5" opacity=".8"/><path d="M-6.2,-3.8 A4.3,3.5 0 0 1 -0.5,-7.7" fill="none" stroke="#fff" stroke-width="1" opacity=".8" stroke-linecap="round"/><path d="M-5,-7.6 L1,-1.4 M1,-7.6 L-5,-1.4" stroke="#5d7fa6" stroke-width=".7"/><polygon points="-11.5,-12.3 -6.2,-11.2 -9.9,-7.8" fill="#2d8cf0"/><polygon points="5.3,-12.3 0.4,-10.8 4.1,-7.8" fill="#2d8cf0"/><polygon points="-12.6,4.4 -9.9,-1.2 -6.2,2.5" fill="#2d8cf0"/><polygon points="7.5,2.9 4.9,-2 2,1.7" fill="#2d8cf0"/><circle cx="-11.5" cy="-12.3" r=".7" fill="#7a1020"/><circle cx="5.3" cy="-12.3" r=".7" fill="#7a1020"/><circle cx="-12.6" cy="4.4" r=".7" fill="#7a1020"/><circle cx="7.5" cy="2.9" r=".7" fill="#7a1020"/></g><g transform="translate(743.2 41.8)" ><polygon points="-11.4,-7.7 -2.0,-11.2 8.9,-8.0 7.7,2.5 0.7,9.1 -10.2,3.7" fill="#8486c4" stroke="#2c2c58" stroke-width=".7" stroke-linejoin="round"/><polygon points="-10.2,3.7 -2.0,-1.4 7.7,2.5 0.7,9.1" fill="#a9abe0" opacity=".9"/><polygon points="-11.4,-7.7 -2.0,-11.2 8.9,-8.0 0.7,-3.4" fill="#9698d2" stroke="#2c2c58" stroke-width=".6"/><path d="M0.7,-3.4 L0.7,9.1 M-10.2,3.7 L-2.0,-1.4 M-2.0,-1.4 L7.7,2.5 M-2.0,-1.4 L-2.0,-11.2" stroke="#34346a" stroke-width=".6" fill="none"/><circle cx="-11.4" cy="-7.7" r="1.05" fill="#12122a"/><circle cx="-2.0" cy="-11.2" r="1.05" fill="#12122a"/><circle cx="8.9" cy="-8.0" r="1.05" fill="#12122a"/><circle cx="0.7" cy="-3.4" r="1.05" fill="#12122a"/><circle cx="-10.2" cy="3.7" r="1.05" fill="#12122a"/><circle cx="0.7" cy="9.1" r="1.05" fill="#12122a"/><circle cx="7.7" cy="2.5" r="1.05" fill="#12122a"/></g><rect x="768.7" y="30.3" width="149.4" height="20" rx="3.8" fill="url(#gbox)" stroke="#858585" stroke-width=".9"/><line x1="793.3" y1="33" x2="793.3" y2="47.6" stroke="#b8b8b8" stroke-width="1"/><line x1="818.4" y1="33" x2="818.4" y2="47.6" stroke="#b8b8b8" stroke-width="1"/><line x1="843.5" y1="33" x2="843.5" y2="47.6" stroke="#b8b8b8" stroke-width="1"/><line x1="868.3" y1="33" x2="868.3" y2="47.6" stroke="#b8b8b8" stroke-width="1"/><line x1="893.5" y1="33" x2="893.5" y2="47.6" stroke="#b8b8b8" stroke-width="1"/><g transform="translate(781.0 40.3)" ><polygon points="-6.5,0.2 -6.5,4.4 0.2,7.3 0.5,1.7" fill="#fdfdfd" stroke="#555" stroke-width=".6" stroke-linejoin="round"/><polygon points="0.5,1.7 6.4,-0.2 6.4,4.4 0.2,7.3" fill="#f0f0f0" stroke="#555" stroke-width=".6" stroke-linejoin="round"/><polygon points="-7.4,-0.1 -1,-6.8 5.2,-5.6 7.7,-0.6 0.5,1.8" fill="#b89a74" stroke="#4a3a28" stroke-width=".6" stroke-linejoin="round"/><polygon points="-3.8,1.2 -2.2,1.9 -2.2,5.7 -3.8,5" fill="#0b0b0b"/><rect x="2.1" y="-6.6" width="3" height="4.2" fill="#fff" stroke="#555" stroke-width=".6"/><rect x="3" y="-5.4" width="1" height="2.6" fill="#ccc"/></g><g transform="translate(805.8 40.3)" ><polygon points="-5.5,-5.3 0.3,-6.1 0.3,7.2 -5.5,6.4" fill="#c9aa7e" stroke="#4a3a28" stroke-width=".6" stroke-linejoin="round"/><polygon points="0.3,-6.1 5.8,-4.9 5.8,6 0.3,7.2" fill="#ad9066" stroke="#4a3a28" stroke-width=".6" stroke-linejoin="round"/><rect x="2.7" y="-4.1" width="2.3" height="4.3" fill="#fff" stroke="#4a3a28" stroke-width=".5"/></g><g transform="translate(831.0 40.3)" ><rect x="-6.4" y="0.4" width="12.5" height="8" fill="#fff" stroke="#888" stroke-width=".7"/><polygon points="-6.4,0.6 -0.2,-6 6.1,0.6" fill="#fff"/><rect x="2" y="-6.4" width="1.7" height="2.2" fill="#fff" stroke="#888" stroke-width=".5"/><path d="M-7.6,0.4 L-0.2,-6.9 L6.9,0.4" fill="none" stroke="#3a2c1e" stroke-width="1.3" stroke-linejoin="miter"/><rect x="-2.1" y="0.9" width="3.5" height="6.8" fill="#0b0b0b"/></g><g transform="translate(855.9 40.3)" ><rect x="-6.9" y="0.2" width="14" height="8.2" fill="#fff" stroke="#999" stroke-width=".8"/><rect x="-7.7" y="-6.8" width="15.4" height="7" fill="#b89a74" stroke="#4a3a28" stroke-width=".7"/></g><g transform="translate(880.9 40.3)" ><rect x="-6.9" y="0.2" width="14.2" height="8.2" fill="#fff" stroke="#999" stroke-width=".8"/><rect x="-7.5" y="-6" width="15.4" height="6.2" fill="#b89a74" stroke="#4a3a28" stroke-width=".7"/><rect x="0.5" y="-7.1" width="5.4" height="5" fill="#fff" stroke="#4a3a28" stroke-width=".7"/></g><g transform="translate(905.8 40.3)" ><rect x="-6.5" y="0.4" width="12.5" height="8" fill="#fff" stroke="#999" stroke-width=".7"/><polygon points="-6.5,0.6 -0.4,-6 6,0.6" fill="#fff"/><rect x="-4.9" y="-6.4" width="1.6" height="2.2" fill="#fff" stroke="#999" stroke-width=".5"/><path d="M-7.4,0.5 L-0.4,-6.8 L6.9,0.5" fill="none" stroke="#3a2c1e" stroke-width="1.0"/></g>
</svg>
<div id="pal"><div id="pal-t"><div class="pc" style="left:6.1px"></div><div class="pc" style="left:24.1px"></div><div class="pc" style="left:42.1px"></div></div><div class="grp" style="top:16px;height:67px"><div class="cell" style="left:1px;top:1px"></div><div class="cell" style="left:34px;top:1px"></div><div class="cell" style="left:1px;top:34px"></div><div class="cell" style="left:34px;top:34px"></div></div><div class="grp" style="top:92px;height:100px"><div class="cell" style="left:1px;top:1px"></div><div class="cell" style="left:34px;top:1px"></div><div class="cell" style="left:1px;top:34px"></div><div class="cell" style="left:34px;top:34px"></div><div class="cell" style="left:1px;top:67px"></div><div class="cell" style="left:34px;top:67px"></div></div><div class="grp" style="top:200px;height:100px"><div class="cell" style="left:1px;top:1px"></div><div class="cell" style="left:34px;top:1px"></div><div class="cell" style="left:1px;top:34px"></div><div class="cell" style="left:34px;top:34px"></div><div class="cell" style="left:1px;top:67px"></div><div class="cell" style="left:34px;top:67px"></div></div><div class="grp" style="top:308px;height:100px"><div class="cell" style="left:1px;top:1px"></div><div class="cell" style="left:34px;top:1px"></div><div class="cell" style="left:1px;top:34px"></div><div class="cell" style="left:34px;top:34px"></div><div class="cell" style="left:1px;top:67px"></div><div class="cell" style="left:34px;top:67px"></div></div><div class="grp" style="top:416px;height:100px"><div class="cell on" style="left:1px;top:1px"></div><div class="cell" style="left:34px;top:1px"></div><div class="cell" style="left:1px;top:34px"></div><div class="cell" style="left:34px;top:34px"></div><div class="cell" style="left:1px;top:67px"></div><div class="cell" style="left:34px;top:67px"></div></div><div class="grp" style="top:523px;height:67px"><div class="cell" style="left:1px;top:1px"></div><div class="cell" style="left:34px;top:1px"></div><div class="cell" style="left:1px;top:34px"></div><div class="cell" style="left:34px;top:34px"></div></div></div>
<svg width="1025" height="771" viewBox="0 0 1025 771" style="pointer-events:none">
<g transform="translate(21.0 99.0)" ><path d="M-4.4,-10.4 L-4.4,3.9 L-1.6,1.3 L0.6,6.2 L3.2,5.0 L0.9,0.2 L4.9,-0.4 Z" fill="#000" stroke="#fff" stroke-width="2.3" stroke-linejoin="round" paint-order="stroke"/><path d="M-3.6,-8.4 L-3.6,5.2 M0.2,7.6 L3.8,6" stroke="#000" stroke-width="1" opacity=".25" fill="none"/><path d="M-4.4,-10.4 L-4.4,3.9 L-1.6,1.3 L0.6,6.2 L3.2,5.0 L0.9,0.2 L4.9,-0.4 Z" fill="#000"/></g><g transform="translate(54.0 99.0)" ><polygon points="-9.6,-6 1.8,-12.6 11.5,-3.3 9.8,4.2 -2.1,10.4 -8.8,0.7" fill="#fff"/><polygon points="-8.8,0.7 -2.1,10.4 -1.3,2 -9.6,-6" fill="#e4e4e4"/><path d="M-7.4,-5.2 L1.6,-10.4 L9.2,-3.2 L-1.1,1.2 Z M-7,0.3 L-2,7.8 L8,3 L8.6,-1.6 M-1.1,1.2 L-2,7.8" fill="none" stroke="#111" stroke-width="1.25" stroke-linejoin="round"/><path d="M-9.6,-6 L1.8,-12.6 L11.5,-3.3 L9.8,4.2 L-2.1,10.4 L-8.8,0.7 Z" fill="none" stroke="#1e9cff" stroke-width="1.7" stroke-linejoin="round"/><path d="M-9.6,-6 L-8.2,-4.6 M11.5,-3.3 L9.8,-2.6 M-2.1,10.4 L-2,9" fill="none" stroke="#1e9cff" stroke-width="1.5"/></g><g transform="translate(21.0 132.0)" ><ellipse cx="2.6" cy="8.7" rx="9.4" ry="2.2" fill="#000" opacity=".28"/><path d="M-8.1,-4.8 L0.6,-11.9 L10.6,-3 C12.4,-0.6 11.6,2.4 9,5 C6.6,7.6 3.6,8.4 1.4,7.2 L-6,1.4 Z" fill="#555b63"/><path d="M-5.2,1.6 L-4,-0.4 L0.6,-3.6 L7.7,3.5 C6.6,5.4 5,6.8 3.5,7.2 C2.6,7.4 1.8,7.2 1.4,7 Z" fill="#dcd19f"/><path d="M3.4,-8.4 L9.3,-2.6 L8.6,-1.2 L2.6,-7.4 Z" fill="#c9bd8c"/><ellipse cx="-3.75" cy="-8.35" rx="5.9" ry="2.3" transform="rotate(-39 -3.75 -8.35)" fill="#1c1f24"/><ellipse cx="-3.3" cy="-8.1" rx="4.6" ry="1.4" transform="rotate(-39 -3.3 -8.1)" fill="#f0a316"/><path d="M1.8,-11.4 C3.4,-13 7.4,-12.8 8.6,-10.2 C9.4,-8 6.6,-5.4 3.9,-3.6" fill="none" stroke="#0b0b0b" stroke-width="1.5" stroke-linecap="round"/><path d="M0.2,-11.4 C-5,-8.6 -10.4,-3.6 -11.3,0.6 C-11.6,2.6 -11.2,4.4 -10.4,5.6" fill="none" stroke="#15181c" stroke-width="1.5" stroke-linecap="round"/><path d="M-6.8,-6.2 C-4,-8 -1,-8.6 -0.6,-7 C-3.6,-5.2 -6,-1.4 -6.8,2.6 C-7.2,5.2 -7.8,7.2 -8.8,6.8 C-10.6,5 -11.4,1.6 -10.6,-1 C-9.8,-3.4 -8.6,-5 -6.8,-6.2 Z" fill="#ffe81a" stroke="#b89a00" stroke-width=".4"/><ellipse cx="-9.2" cy="8.9" rx=".9" ry="1.1" fill="#f5d400"/></g><g transform="translate(54.0 132.0)" ><polygon points="0,10.6 2.6,1 10.9,-10.4 12.2,-3.4 1.2,10.2" fill="#000" opacity=".26"/><polygon points="-8.3,-2.3 1.8,-12.9 10.6,-10.8 2.3,0.6" fill="#f9a9be"/><polygon points="-8.3,-2.3 2.3,0.6 -0.4,10.3 -10.6,4.5" fill="#ee8ca7"/><path d="M2.3,0.6 L10.6,-10.8 L10.1,-9.2 L-0.4,10.3" fill="#7a3048" stroke="#5a2034" stroke-width=".7"/><polygon points="-8.3,-2.3 1.8,-12.9 10.6,-10.8 2.3,0.6 -0.4,10.3 -10.6,4.5" fill="none" stroke="#8a4a60" stroke-width=".6"/><text x="0" y="0" transform="translate(2.3 -4.4) rotate(-50) scale(.85 1)" font-family="Liberation Sans,sans-serif" font-size="5" font-weight="bold" fill="#2e1c24" text-anchor="middle">pink</text></g><g transform="translate(21.0 175.0)" ><polygon points="-9,10.8 11.8,7.8 12.2,8.8 -8.4,11.8" fill="#000" opacity=".25"/><polygon points="-11.7,-10.1 8.5,-12.7 11.4,7.1 -9.1,10.1" fill="#a38d6c" stroke="#0b0b0b" stroke-width=".95" stroke-linejoin="round"/></g><g transform="translate(54.0 175.0)" ><path d="M-6.4,8.6 C-1,7.6 5,5 10,2.4" fill="none" stroke="#6a5a5a" stroke-width="1.6" opacity=".4" stroke-linecap="round"/><g transform="translate(-11.8 10.8) rotate(-46.1)"><polygon points="0,0 6.6,-2.1 6.6,2.1" fill="#ecdca4"/><polygon points="3.4,-1.1 6.6,-2.1 6.6,-0.6" fill="#c8b47c"/><polygon points="0,0 2.6,-0.85 2.6,0.85" fill="#111"/><rect x="6.6" y="-2.1" width="19.2" height="4.2" fill="#ee1010"/><rect x="6.6" y="-2.1" width="19.2" height="1.1" fill="#b00000"/><rect x="6.6" y="1.0" width="19.2" height="1.1" fill="#5a0000" opacity=".75"/><rect x="25.6" y="-2.2" width="2.3" height="4.4" fill="#8a8a8a"/><rect x="27.7" y="-2.2" width="2.7" height="4.4" rx="1" fill="#f0589c"/><rect x="27.7" y="-2.2" width="2.7" height="1.4" rx=".7" fill="#f9a0c8"/></g></g><g transform="translate(21.0 208.0)" ><circle cx="0.5" cy="-0.6" r="11" fill="#000" opacity=".25"/><circle cx="-0.5" cy="-1.4" r="11" fill="#a38d6c" stroke="#0b0b0b" stroke-width=".95"/></g><g transform="translate(54.0 208.0)" ><path d="M-8.4,0.6 C-5.6,-4.6 1.6,-7 7.6,-6.2" fill="none" stroke="#666" stroke-width=".8" opacity=".7"/><path d="M-10.2,2.6 C-10.4,5.6 -9,8.2 -6.2,9.8" fill="none" stroke="#555" stroke-width=".8" opacity=".7"/><path d="M11.4,-8.6 C7,-13.4 -2.6,-13.8 -7.4,-8.3 C-11,-3.6 -11.6,4.6 -5.3,10.1" fill="none" stroke="#0b0b0b" stroke-width="1.7" stroke-linecap="round"/><path d="M11.4,-8.6 C10,-10.2 8,-11.4 6,-12.2 M-9.6,4.8 C-8.8,7 -7.4,8.8 -5.3,10.1" fill="none" stroke="#0b0b0b" stroke-width="2.3" stroke-linecap="round"/></g><g transform="translate(21.0 241.0)" ><polygon points="2.8,10.6 11.2,-11.6 12.6,-5.6 " fill="#000" opacity=".22"/><polygon points="-11.7,-9.2 10.8,-12.5 2.2,10.6" fill="#a38d6c" stroke="#0b0b0b" stroke-width=".95" stroke-linejoin="round"/></g><g transform="translate(54.0 241.0)" ><path d="M-6,-6.4 C-1,-9.4 5,-9.2 8.6,-6.4 M9.6,-1 C9.2,1.6 7.6,3 5.6,3.6" fill="none" stroke="#777" stroke-width=".7" opacity=".7"/><path d="M-10,-9.2 C-7,-11.2 -1,-12.6 2.8,-12.2 C6.4,-11.8 9.4,-10 11,-6.6 C12,-3.4 10.4,-1 8.8,0.2 C7.4,1.4 6.4,2.2 5.4,3.2 C5.2,5.6 4,7.2 2.4,7.9 C0.6,8.8 -1.6,9.6 -3.2,9.2 C-4.8,7.6 -5.4,5.4 -5.3,3.2 C-5.2,0.6 -5.6,-1.8 -5.7,-4 C-7.4,-2.6 -8.8,-0.8 -9.6,0.8 C-10.6,2.8 -11,4.4 -11.3,5.7" fill="none" stroke="#0b0b0b" stroke-width="1.35" stroke-linecap="round" stroke-linejoin="round"/><path d="M1.5,-5.4 L5.4,-1.1 L2.4,1.5 L-1.5,-2.4 Z M-1.9,-2.8 L-1.5,9 M-11.3,5.7 L-8,5 M-11.3,5.7 L-10.4,8.2" fill="none" stroke="#0b0b0b" stroke-width="1.2" stroke-linecap="round" stroke-linejoin="round"/><path d="M-10,-9.2 C-8.6,-10.4 -6.8,-11 -5.2,-11.4" fill="none" stroke="#0b0b0b" stroke-width="2.2" stroke-linecap="round"/></g><g transform="translate(21.0 283.0)" ><polygon points="-5.0,-12.5 -5.2,-5.8 1.4,-8.5" fill="#fff" stroke="#fff" stroke-width="1.6" stroke-linejoin="round"/><polygon points="-5.0,-12.5 -5.2,-5.8 1.4,-8.5" fill="#000" opacity=".35" transform="translate(.5 .8)"/><polygon points="11.2,-7.1 4.3,-7.7 8.1,-1.1" fill="#fff" stroke="#fff" stroke-width="1.6" stroke-linejoin="round"/><polygon points="11.2,-7.1 4.3,-7.7 8.1,-1.1" fill="#000" opacity=".35" transform="translate(.5 .8)"/><polygon points="8.3,9.7 0.6,4.5 7.2,1.0" fill="#fff" stroke="#fff" stroke-width="1.6" stroke-linejoin="round"/><polygon points="8.3,9.7 0.6,4.5 7.2,1.0" fill="#000" opacity=".35" transform="translate(.5 .8)"/><polygon points="-11.6,3.5 -6.0,-2.7 -1.7,4.3" fill="#fff" stroke="#fff" stroke-width="1.6" stroke-linejoin="round"/><polygon points="-11.6,3.5 -6.0,-2.7 -1.7,4.3" fill="#000" opacity=".35" transform="translate(.5 .8)"/><line x1="1.0" y1="-2.4" x2="-1.9" y2="-7.2" stroke="#ee1c24" stroke-width="2.1"/><polygon points="-5.0,-12.5 -5.2,-5.8 1.4,-8.5" fill="#ee1c24" stroke="#a00008" stroke-width=".4"/><line x1="1.0" y1="-2.4" x2="6.2" y2="-4.4" stroke="#ee1c24" stroke-width="2.1"/><polygon points="11.2,-7.1 4.3,-7.7 8.1,-1.1" fill="#ee1c24" stroke="#a00008" stroke-width=".4"/><line x1="1.0" y1="-2.4" x2="3.9" y2="2.8" stroke="#ee1c24" stroke-width="2.1"/><polygon points="8.3,9.7 0.6,4.5 7.2,1.0" fill="#ee1c24" stroke="#a00008" stroke-width=".4"/><line x1="1.0" y1="-2.4" x2="-3.9" y2="0.8" stroke="#ee1c24" stroke-width="2.1"/><polygon points="-11.6,3.5 -6.0,-2.7 -1.7,4.3" fill="#ee1c24" stroke="#a00008" stroke-width=".4"/><circle cx="1.0" cy="-2.4" r="1.2" fill="#fff"/></g><g transform="translate(54.0 283.0)" ><polygon points="-3,11.6 10.9,6.2 12.4,6.6 -2.4,12.4" fill="#000" opacity=".22"/><polygon points="-11.6,1.9 -0.6,-1.6 9.9,1.6 -3,6.5" fill="#e0c192" stroke="#5e4a2c" stroke-width=".5" stroke-linejoin="round"/><polygon points="-11.6,1.9 -3,6.5 -3,10.5 -11.6,5.2" fill="#7c643e" stroke="#5e4a2c" stroke-width=".5" stroke-linejoin="round"/><polygon points="-3,6.5 9.9,1.6 9.9,5.2 -3,10.5" fill="#9d8358" stroke="#5e4a2c" stroke-width=".5" stroke-linejoin="round"/><rect x="-2.5" y="-5" width="2.8" height="6.8" fill="#ee1c24"/><polygon points="-1.1,-12.9 -5.8,-4.0 3.6,-4.0" fill="#ee1c24" stroke="#a00008" stroke-width=".3"/></g><g transform="translate(21.0 316.0)" ><g transform="translate(.8 1)" opacity=".3"><path d="M-9.6,-4 C-6,-12.6 5,-12.8 8.2,-6.6" fill="none" stroke="#000" stroke-width="2.6"/><path d="M9.4,1.4 C6,9.6 -4.6,9.8 -8,4" fill="none" stroke="#000" stroke-width="2.6"/></g><path d="M-9.6,-4 C-6,-12.4 4.6,-12.8 8,-6.8" fill="none" stroke="#ee1c24" stroke-width="2.7"/><polygon points="11.4,-3.2 3.6,-5.2 9.6,-12" fill="#ee1c24"/><path d="M9.4,1.6 C6,9.6 -4.4,10 -8,4.2" fill="none" stroke="#ee1c24" stroke-width="2.7"/><polygon points="-11.2,0.4 -3.6,2.6 -9.6,9.4" fill="#ee1c24"/></g><g transform="translate(54.0 316.0)" ><ellipse cx="2.4" cy="9.2" rx="8.6" ry="2.3" fill="#000" opacity=".28"/><path d="M-7.8,4 L-7.8,7.8 A8.1,3.4 0 0 0 8.4,7.8 L8.4,4 Z" fill="#4e3e28"/><ellipse cx="0.3" cy="4" rx="8.1" ry="3.3" fill="#cbad7e"/><path d="M-10.2,-12.2 C0,-12.8 8.6,-6 8.4,4.4" fill="none" stroke="#ee1c24" stroke-width="1.5"/><path d="M1.6,4.2 C2.2,0 0,-2.8 -3.2,-4.4" fill="none" stroke="#ee1c24" stroke-width="2.6"/><polygon points="-9.8,-6.8 -1.2,-8.2 -4.6,0" fill="#ee1c24"/></g><g transform="translate(21.0 349.0)" ><polygon points="-7.6,11.4 12,3.6 12.4,4.6 -7,12.2" fill="#000" opacity=".25"/><polygon points="-11.7,-8.6 3.5,-12.5 11.4,2.7 -8.4,10.6" fill="#fff" stroke="#444" stroke-width=".8" stroke-linejoin="round"/><polygon points="0.6,-2.9 6.4,-5.1 11.2,2.2 4.6,5" fill="#a38d6c" stroke="#4a3c28" stroke-width=".5"/><line x1="-1.1" y1="-2.9" x2="-5.6" y2="-5.6" stroke="#ee1c24" stroke-width="2.3"/><polygon points="-9.3,-8 -3.6,-8 -7.3,-2.7" fill="#ee1c24"/></g><g transform="translate(54.0 349.0)" ><path d="M-7.7,9.9 C-13.4,3 -13,-5 -7.4,-10.2" fill="none" stroke="#0b0b0b" stroke-width="1.9" stroke-linecap="round"/><path d="M-6,-11.3 C-0.6,-14.2 6.6,-12.8 10.9,-8" fill="none" stroke="#0b0b0b" stroke-width="1.4" stroke-linecap="round"/><path d="M-1.5,3.4 C-4.6,-0.2 -4.2,-3.4 -1.6,-5.6" fill="none" stroke="#0b0b0b" stroke-width="1.5" stroke-linecap="round"/><path d="M1.2,-6.2 C3.4,-6.8 5.6,-6 7.1,-4.6" fill="none" stroke="#0b0b0b" stroke-width="1.3" stroke-linecap="round"/><path d="M1.6,-8.4 C3.6,-8.8 5.2,-8.4 6.4,-7.6" fill="none" stroke="#555" stroke-width=".8" stroke-linecap="round" opacity=".7"/><line x1="1.2" y1="-3" x2="-4.4" y2="-7" stroke="#ee1c24" stroke-width="2.3"/><polygon points="-8.6,-11 -1.4,-9.8 -7.2,-3.6" fill="#ee1c24" stroke="#a00008" stroke-width=".3"/></g><g transform="translate(21.0 391.0)" ><ellipse cx="4.2" cy="5.4" rx="7" ry="2.3" fill="#000" opacity=".22"/><path d="M-2,-12.3 L7.6,-12.3 C9,-12.3 9.8,-11.4 9.7,-10 L8.7,-1.6 C8.5,-0.2 7.6,0.8 6.2,1.3 L-0.2,3.3 C-1.2,3.5 -2,3.2 -2.6,2.4 L-4.2,0.2 L-5.2,-5.3 L-4.7,-9.6 Z" fill="#4c4c4e"/><path d="M-2,-12.3 L-4.7,-9.6 L-5.2,-5.3 L-4.2,0.2 L-2.6,2.4 L-1.6,-0.6 L-1.2,-8.6 Z" fill="#6e6e72"/><ellipse cx="-3.7" cy="-6.1" rx="1.7" ry="2.7" fill="#f5b21c"/><ellipse cx="4.7" cy="-4.3" rx="3.5" ry="4.7" transform="rotate(12 4.7 -4.3)" fill="#f7b520" stroke="#2e3440" stroke-width=".7"/><polygon points="-2.2,0.8 -0.8,3.3 -10.6,7.4 -11.6,4.8" fill="#f6bb1e"/><path d="M-3.8,1.6 L-2.8,4 M-6,2.5 L-5,4.9 M-8.2,3.4 L-7.2,5.8" stroke="#3a3000" stroke-width=".9" opacity=".8"/><path d="M-11.8,4.8 L-9.9,10.6" stroke="#2c2c30" stroke-width="1.3" stroke-linecap="round"/></g><g transform="translate(54.0 391.0)" ><path d="M-8.6,3.4 L2.9,-9.4" stroke="#0b0b0b" stroke-width="1.1"/><path d="M-10.4,1.6 L0.2,10.6 M1.2,-11.2 L11.6,-1.9" stroke="#0b0b0b" stroke-width="1.6" stroke-linecap="round"/><path d="M-10.6,4.6 L-6.8,-0.6 M-11.8,2.4 L-5.4,3.0 M1,-7.4 L4.6,-12.6 M-0.4,-10.4 L6,-9.6" stroke="#0b0b0b" stroke-width="1.1"/><text x="0" y="0" transform="translate(-6.2 -4.8) rotate(-38)" font-family="Liberation Sans,sans-serif" font-size="9.5" font-weight="bold" fill="#0b0b0b" text-anchor="middle">5</text></g><g transform="translate(21.0 424.0)" ><polygon points="-4.6,10.4 11.6,-4 12,-0.6 -2,11" fill="#000" opacity=".22"/><path d="M10.8,-11.9 C3,-13.4 -6.4,-9.6 -10.4,-1.8 C-12.6,3 -10.4,8 -5.8,9.9 Z" fill="#f4c528" stroke="#a77c08" stroke-width=".7" stroke-linejoin="round"/><path d="M4.6,-8.8 C-1,-8 -5.6,-4.8 -7.2,-0.4 C-7.8,1.6 -7.4,3.4 -6.6,4.4 Z" fill="#e9e9e9" stroke="#a77c08" stroke-width=".5"/><path d="M8.2,-8.2 L-4.6,7.6" stroke="#a77c08" stroke-width=".6" stroke-dasharray="1 1.2" fill="none"/><path d="M6,-11.4 C-1.6,-11.4 -8,-6.6 -9.8,0.6" stroke="#a77c08" stroke-width=".6" stroke-dasharray=".8 1.4" fill="none"/></g><g transform="translate(54.0 424.0)" ><rect x="-6.4" y="-7.4" width="18.6" height="7.6" fill="#000" opacity=".2"/><rect x="-8.5" y="-9.5" width="19" height="7.5" fill="#fff" stroke="#000" stroke-width="1" shape-rendering="crispEdges"/><text x="1.1" y="-3.3" font-family="Liberation Sans,sans-serif" font-size="7.2" font-weight="bold" fill="#000" text-anchor="middle" letter-spacing=".35">ABC</text><line x1="-8.5" y1="-2" x2="-8.5" y2="6" stroke="#000" stroke-width="1" shape-rendering="crispEdges"/><polygon points="-10.9,5.2 -6.1,5.2 -8.5,10.9" fill="#000"/></g><g transform="translate(21.0 457.0)" ><line x1="-11" y1="7.3" x2="6" y2="-1.8" stroke="#1fc41f" stroke-width="2.4" stroke-dasharray="2 .8"/><polygon points="9.6,-3.8 3.6,-4 5.6,0.6" fill="#1fc41f"/><line x1="-8.4" y1="-1.6" x2="6.4" y2="6.8" stroke="#e8141c" stroke-width="2.4"/><polygon points="11,9.4 4,8.6 7,4" fill="#e8141c"/><line x1="-1.1" y1="10.6" x2="-1.1" y2="-6.6" stroke="#1030e0" stroke-width="2.6"/><polygon points="-1.1,-12.8 -4.6,-5.6 2.4,-5.6" fill="#1030e0"/></g><g transform="translate(54.0 457.0)" ><g transform="translate(-1 0) skewX(-7) scale(.84 1)"><text x="7" y="6" font-family="Liberation Serif,serif"  font-weight="bold" text-anchor="middle" fill="#888" opacity=".4" font-size="22">A</text><text x="1.4" y="10.6" font-family="Liberation Serif,serif" font-size="30" font-weight="bold" text-anchor="middle" fill="#2e2212">A</text><text x="0.2" y="9.6" font-family="Liberation Serif,serif" font-size="30" font-weight="bold" text-anchor="middle" fill="#d2b78c" stroke="#3e2e1c" stroke-width=".7">A</text></g></g><g transform="translate(21.0 499.0)" ><path d="M-11.4,-3.4 C-10.4,-5.6 -6,-6.2 -1,-5.7 L4.9,-4.7 C8,-3.8 11.2,-1.6 11.5,0.4 L9.6,4.4" fill="none" stroke="#101820" stroke-width="2"/><path d="M-1.4,-12.8 C-3.6,-10.6 -5,-7 -4.7,-3.4 M-2.9,5.6 C-1.8,8 -0.2,9.8 1.4,10.3 L4,9.6" fill="none" stroke="#101820" stroke-width="2"/><path d="M-11.6,-2.4 C-10.4,0.6 -8.6,2.2 -6.4,2.8" fill="none" stroke="#1f4f86" stroke-width="3.2"/><polygon points="-7,-2.9 3,4.2 -6.7,6.6" fill="#1f4f86"/><path d="M4,9.6 C7.6,5.6 8.6,0 6,-5.2" fill="none" stroke="#1f4f86" stroke-width="2.7"/><polygon points="2.9,-12.2 0.5,-4.0 10.2,-5.4" fill="#1f4f86"/></g><g transform="translate(54.0 499.0)" ><path d="M-12.5,5.6 C-10,3.6 -9.4,2 -9,0.2 C-8.4,-3 -7.6,-6 -6.6,-7.7 C-5.6,-9.6 -4,-10.8 -3,-10.5 C-2.2,-10.2 -2.2,-9.4 -2.4,-8.8 C-1.4,-10.6 0.2,-12.2 1.4,-11.8 C2.4,-11.4 2.4,-10.4 2.2,-9.8 C3.2,-11.2 4.6,-12.2 5.6,-11.6 C6.6,-11 6.4,-10 6.2,-9.4 C7.2,-10.4 8.4,-10.8 9.2,-10 C10,-9 9.4,-7.8 8.6,-6.6 C7,-4.2 4.6,-1.6 2.9,0.9 C4.6,0.4 7.2,0.6 8.6,1 C10,1.4 10.4,2.6 9.6,3.4 C8.4,4.2 7.2,4 6.6,4.2 C3.6,5 0.6,6 -2,7.2 C-3.6,8 -4.8,9.2 -5.9,10.3 Z" fill="#fff" stroke="#1a1a1a" stroke-width=".55" stroke-linejoin="round"/><path d="M-1.4,-10 L-3,-6" stroke="#0b0b0b" stroke-width="1.1" stroke-linecap="round" fill="none"/><path d="M3.2,-10.6 L0.2,-5" stroke="#0b0b0b" stroke-width="1.9" stroke-linecap="round" fill="none"/><path d="M6.4,-9 L3,-4.6" stroke="#0b0b0b" stroke-width="1.3" stroke-linecap="round" fill="none"/><path d="M2.9,0.9 C2.4,2 2.6,2.8 3.6,3" stroke="#0b0b0b" stroke-width=".8" fill="none"/></g><g transform="translate(21.0 532.0)" ><ellipse cx="-4.8" cy="1.2" rx="6.2" ry="1.5" fill="#000" opacity=".2"/><line x1="0.1" y1="-1.6" x2="1.5" y2="0.1" stroke="#6a6a6a" stroke-width="1.7"/><line x1="1.5" y1="0.1" x2="9.4" y2="8.8" stroke="#0b0b0b" stroke-width="2.7" stroke-linecap="round"/><line x1="1.4" y1="0.7" x2="8.4" y2="8.4" stroke="#8a8a8a" stroke-width=".6" opacity=".8"/><ellipse cx="-4.2" cy="-6.3" rx="6.5" ry="5.3" fill="url(#glens)" stroke="#262626" stroke-width="1.9"/><ellipse cx="-4.2" cy="-6.3" rx="7.2" ry="6.0" fill="none" stroke="#777" stroke-width=".5" opacity=".8"/><path d="M-8.9,-5.5 A4.8,3.9 0 0 1 -2.6,-9.9" fill="none" stroke="#fff" stroke-width="1" opacity=".8" stroke-linecap="round"/></g><g transform="translate(54.0 532.0)" ><ellipse cx="-5.0" cy="0.6" rx="5.7" ry="1.5" fill="#000" opacity=".2"/><line x1="-0.6" y1="-2.1" x2="0.8" y2="-0.4" stroke="#6a6a6a" stroke-width="1.7"/><line x1="0.8" y1="-0.4" x2="8.6" y2="8.8" stroke="#0b0b0b" stroke-width="2.7" stroke-linecap="round"/><line x1="0.7" y1="0.2" x2="7.6" y2="8.4" stroke="#8a8a8a" stroke-width=".6" opacity=".8"/><ellipse cx="-4.4" cy="-6.6" rx="6.1" ry="5.0" fill="url(#glens)" stroke="#262626" stroke-width="1.9"/><ellipse cx="-4.4" cy="-6.6" rx="6.8" ry="5.7" fill="none" stroke="#777" stroke-width=".5" opacity=".8"/><path d="M-8.8,-5.9 A4.5,3.7 0 0 1 -2.9,-10.0" fill="none" stroke="#fff" stroke-width="1" opacity=".8" stroke-linecap="round"/><polygon points="-6.6,-8.6 6.2,-10.2 10.2,4.6 -5.7,7.2" fill="none" stroke="#1024cc" stroke-width="1.6" stroke-dasharray="3.6 2.2"/></g><g transform="translate(21.0 565.0)" ><ellipse cx="-2.6" cy="2.5" rx="5.5" ry="1.5" fill="#000" opacity=".2"/><line x1="1.6" y1="-0.1" x2="3.0" y2="1.7" stroke="#6a6a6a" stroke-width="1.7"/><line x1="3.0" y1="1.7" x2="8.6" y2="8.6" stroke="#0b0b0b" stroke-width="2.7" stroke-linecap="round"/><line x1="2.8" y1="2.3" x2="7.6" y2="8.1" stroke="#8a8a8a" stroke-width=".6" opacity=".8"/><ellipse cx="-2.0" cy="-4.5" rx="5.8" ry="4.8" fill="url(#glens)" stroke="#262626" stroke-width="1.9"/><ellipse cx="-2.0" cy="-4.5" rx="6.5" ry="5.5" fill="none" stroke="#777" stroke-width=".5" opacity=".8"/><path d="M-6.2,-3.8 A4.3,3.5 0 0 1 -0.5,-7.7" fill="none" stroke="#fff" stroke-width="1" opacity=".8" stroke-linecap="round"/><path d="M-5,-7.6 L1,-1.4 M1,-7.6 L-5,-1.4" stroke="#5d7fa6" stroke-width=".7"/><polygon points="-11.5,-12.3 -6.2,-11.2 -9.9,-7.8" fill="#2d8cf0"/><polygon points="5.3,-12.3 0.4,-10.8 4.1,-7.8" fill="#2d8cf0"/><polygon points="-12.6,4.4 -9.9,-1.2 -6.2,2.5" fill="#2d8cf0"/><polygon points="7.5,2.9 4.9,-2 2,1.7" fill="#2d8cf0"/><circle cx="-11.5" cy="-12.3" r=".7" fill="#7a1020"/><circle cx="5.3" cy="-12.3" r=".7" fill="#7a1020"/><circle cx="-12.6" cy="4.4" r=".7" fill="#7a1020"/><circle cx="7.5" cy="2.9" r=".7" fill="#7a1020"/></g><g transform="translate(54.0 565.0)" ><ellipse cx="-6.3" cy="1.1" rx="5.5" ry="1.5" fill="#000" opacity=".2"/><line x1="-1.6" y1="-1.8" x2="-0.0" y2="-0.2" stroke="#6a6a6a" stroke-width="1.7"/><line x1="-0.0" y1="-0.2" x2="9.6" y2="9.4" stroke="#0b0b0b" stroke-width="2.7" stroke-linecap="round"/><line x1="-0.1" y1="0.4" x2="8.5" y2="9.0" stroke="#8a8a8a" stroke-width=".6" opacity=".8"/><ellipse cx="-5.7" cy="-5.9" rx="5.8" ry="4.8" fill="url(#glens)" stroke="#262626" stroke-width="1.9"/><ellipse cx="-5.7" cy="-5.9" rx="6.5" ry="5.5" fill="none" stroke="#777" stroke-width=".5" opacity=".8"/><path d="M-9.9,-5.2 A4.3,3.5 0 0 1 -4.2,-9.1" fill="none" stroke="#fff" stroke-width="1" opacity=".8" stroke-linecap="round"/><path d="M11.4,3.4 C13,-4 7,-8.6 0.4,-5.6 L-0.8,-8.8 L-5.6,1.6 L-2.6,9 L-1.6,5.8 C0.4,2.2 4,1.6 6.2,4.6 C6.6,1.6 8.4,0.6 11.4,3.4 Z" fill="#1f7ef0" stroke="#0d4ea8" stroke-width=".5"/><path d="M6.8,-2.6 C8.6,-1.6 9.4,0.4 9,2" stroke="#0d3f8c" stroke-width="1.1" fill="none"/></g><g transform="translate(21.0 606.0)" ><path d="M0.2,-13 L1.2,-11.8 C2.2,-11.2 2.4,-9.6 1.8,-8.6 C3.8,-7.6 4.6,-5.4 4.6,-2.6 C4.6,-0.6 4.4,0.8 3.8,1.2 L3.4,-1.6 C3.2,1.6 3,4 2.4,6.6 L0.8,6.6 L0.4,2.2 L-0.4,6.6 L-2.2,6.6 C-2.8,3.6 -3,1.4 -3,-1.2 L-3.6,1.4 C-4.4,0.4 -4.4,-1.4 -4.2,-3.2 C-4,-5.8 -3,-7.6 -1.2,-8.6 C-2,-9.6 -1.8,-11.4 -0.6,-12 Z" fill="#0b0b0b"/><path d="M-0.8,-7.2 C1,-7.6 2.4,-6 2.4,-3 L1.6,1.4 L-0.4,1 L-1.6,-2.4 Z" fill="#fff"/><path d="M-6.9,9.3 L5.8,4.2 M-5.9,4.7 L6.8,9.3" stroke="#ee1018" stroke-width="1.2"/></g><g transform="translate(54.0 606.0)" ><ellipse cx="-5" cy="-2.2" rx="3.7" ry="6.4" transform="rotate(-9 -5 -2.2)" fill="#0b0b0b"/><ellipse cx="-2.7" cy="7.2" rx="2.9" ry="2.7" transform="rotate(-9 -2.7 7.2)" fill="#0b0b0b"/><ellipse cx="6.4" cy="-8" rx="3.9" ry="6.4" transform="rotate(8 6.4 -8)" fill="#0b0b0b"/><ellipse cx="5.2" cy="1.6" rx="2.8" ry="2.6" transform="rotate(8 5.2 1.6)" fill="#0b0b0b"/></g><g transform="translate(21.0 639.0)" ><ellipse cx="1" cy="2.8" rx="9" ry="5.4" fill="url(#geye)"/><path d="M-9.4,-1.6 C-6,-6.6 4,-8 10.3,-3.5 C6,-1.8 5,2 -0.6,2.2 C-5,2.2 -7.6,0.4 -9.4,-1.6 Z" fill="#fff" stroke="#222" stroke-width=".8"/><circle cx="-0.6" cy="-2.2" r="3.5" fill="#555" stroke="#111" stroke-width=".9"/><circle cx="-0.6" cy="-2.2" r="1.8" fill="#000"/><circle cx="-1.6" cy="-3.4" r="0.9" fill="#fff"/><path d="M-9.8,-1.6 C-7,-9.6 5,-11.4 10.4,-3.6" fill="none" stroke="#111" stroke-width="2" stroke-linecap="round"/><path d="M-7.6,-7.4 C-3,-11.6 5.6,-11.4 9.4,-6.4" fill="none" stroke="#555" stroke-width=".9"/></g><g transform="translate(54.0 639.0)" ><polygon points="0.1,-14.1 12.2,-2.5 0.1,9.7" fill="#0b0b0b"/><circle cx="-1.4" cy="-2.5" r="8.5" fill="#fff" stroke="#0b0b0b" stroke-width="1.2"/><line x1="-12.4" y1="-2.5" x2="8" y2="-2.5" stroke="#0b0b0b" stroke-width="1.1"/><text x="-1.4" y="-4.0" font-family="Liberation Sans,sans-serif" font-size="7.4" font-weight="bold" fill="#0b0b0b" text-anchor="middle">C</text><text x="-1.2" y="4.2" font-family="Liberation Sans,sans-serif" font-size="7" font-weight="bold" fill="#0b0b0b" text-anchor="middle">A-5</text></g>
</svg>
</body></html>
